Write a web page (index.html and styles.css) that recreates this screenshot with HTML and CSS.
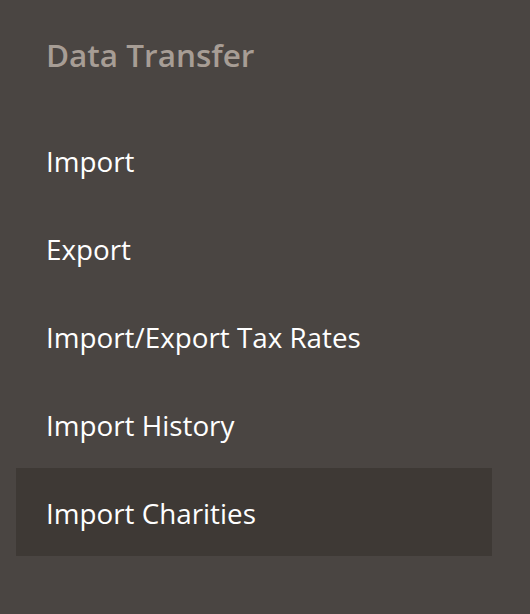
FILE: index.html
```html
<!DOCTYPE html>
<html>
<head>
<meta charset="utf-8">
<link rel="stylesheet" href="styles.css">
</head>
<body>
<nav class="submenu">
  <h2 class="submenu-title">Data Transfer</h2>
  <ul class="submenu-list">
    <li class="submenu-item"><a href="#">Import</a></li>
    <li class="submenu-item"><a href="#">Export</a></li>
    <li class="submenu-item"><a href="#">Import/Export Tax Rates</a></li>
    <li class="submenu-item"><a href="#">Import History</a></li>
    <li class="submenu-item is-active"><a href="#">Import Charities</a></li>
  </ul>
</nav>
</body>
</html>
```
FILE: styles.css
```css
html, body {
  margin: 0;
  padding: 0;
  background: #4a4542;
  height: 100%;
}
.submenu {
  font-family: "Open Sans", "Liberation Sans", sans-serif;
  padding: 0 38px 0 16px;
}
.submenu-title {
  margin: 0;
  padding: 30px 0 0 30px;
  height: 116px;
  box-sizing: border-box;
  font-size: 31.5px;
  font-weight: 600;
  color: #a79d95;
  line-height: 50px;
}
.submenu-list {
  list-style: none;
  margin: 0;
  padding: 0;
}
.submenu-item {
  height: 88px;
  box-sizing: border-box;
  display: flex;
  align-items: center;
  padding: 3px 0 0 30px;
}
.submenu-item a {
  color: #ffffff;
  text-decoration: none;
  font-size: 27.8px;
  line-height: 1;
}
.submenu-item.is-active {
  background: #3e3935;
}
```
